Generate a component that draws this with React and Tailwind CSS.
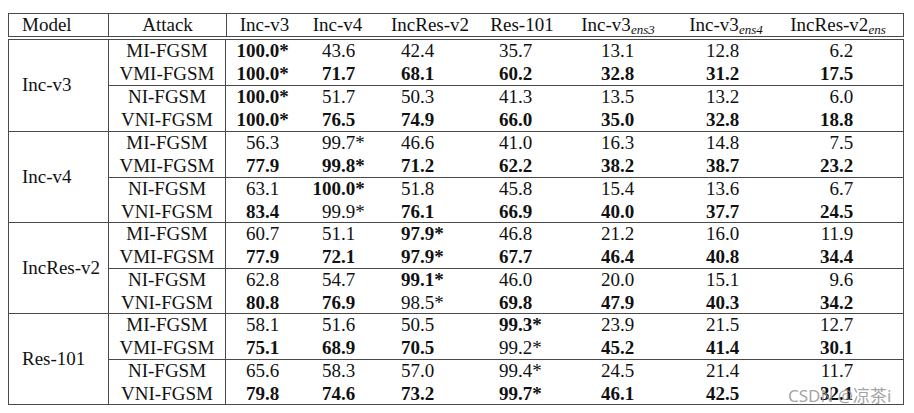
import React from 'react';

// header cells: width of each centred header cell after the Attack column
const headers = [
  { w: 'w-[75px]', label: 'Inc-v3' },
  { w: 'w-[71px]', label: 'Inc-v4' },
  { w: 'w-[114px]', label: 'IncRes-v2' },
  { w: 'w-[70px]', label: 'Res-101' },
  { w: 'w-[122px]', label: 'Inc-v3', sub: 'ens3' },
  { w: 'w-[94px]', label: 'Inc-v3', sub: 'ens4' },
  { w: 'flex-1', label: 'IncRes-v2', sub: 'ens' },
];

// value cells: integer part is right-aligned in 30px so the decimal points line up
const valueCols = ['w-[76px]', 'w-[79px]', 'w-[98px]', 'w-[102px]', 'w-[105px]', 'w-[114px]', 'flex-1'];

const groups = [
  {
    model: 'Inc-v3',
    rows: [
      ['MI-FGSM', '!100.0*', '43.6', '42.4', '35.7', '13.1', '12.8', '6.2'],
      ['VMI-FGSM', '!100.0*', '!71.7', '!68.1', '!60.2', '!32.8', '!31.2', '!17.5'],
      ['NI-FGSM', '!100.0*', '51.7', '50.3', '41.3', '13.5', '13.2', '6.0'],
      ['VNI-FGSM', '!100.0*', '!76.5', '!74.9', '!66.0', '!35.0', '!32.8', '!18.8'],
    ],
  },
  {
    model: 'Inc-v4',
    rows: [
      ['MI-FGSM', '56.3', '99.7*', '46.6', '41.0', '16.3', '14.8', '7.5'],
      ['VMI-FGSM', '!77.9', '!99.8*', '!71.2', '!62.2', '!38.2', '!38.7', '!23.2'],
      ['NI-FGSM', '63.1', '!100.0*', '51.8', '45.8', '15.4', '13.6', '6.7'],
      ['VNI-FGSM', '!83.4', '99.9*', '!76.1', '!66.9', '!40.0', '!37.7', '!24.5'],
    ],
  },
  {
    model: 'IncRes-v2',
    rows: [
      ['MI-FGSM', '60.7', '51.1', '!97.9*', '46.8', '21.2', '16.0', '11.9'],
      ['VMI-FGSM', '!77.9', '!72.1', '!97.9*', '!67.7', '!46.4', '!40.8', '!34.4'],
      ['NI-FGSM', '62.8', '54.7', '!99.1*', '46.0', '20.0', '15.1', '9.6'],
      ['VNI-FGSM', '!80.8', '!76.9', '98.5*', '!69.8', '!47.9', '!40.3', '!34.2'],
    ],
  },
  {
    model: 'Res-101',
    rows: [
      ['MI-FGSM', '58.1', '51.6', '50.5', '!99.3*', '23.9', '21.5', '12.7'],
      ['VMI-FGSM', '!75.1', '!68.9', '!70.5', '99.2*', '!45.2', '!41.4', '!30.1'],
      ['NI-FGSM', '65.6', '58.3', '57.0', '99.4*', '24.5', '21.4', '11.7'],
      ['VNI-FGSM', '!79.8', '!74.6', '!73.2', '!99.7*', '!46.1', '!42.5', '!32.1'],
    ],
  },
];

const Value = ({ raw, width }) => {
  const bold = raw.startsWith('!');
  const text = bold ? raw.slice(1) : raw;
  const dot = text.indexOf('.');
  return (
    <div className={`${width} flex ${bold ? 'font-bold' : ''}`}>
      <span className="w-[30px] text-right">{text.slice(0, dot)}</span>
      <span>{text.slice(dot)}</span>
    </div>
  );
};

const Row = ({ row }) => (
  <div className="flex h-[22.5px] leading-[22.5px]">
    <div className="w-[117px] shrink-0 text-center border-r border-[#4a4a4a]">{row[0]}</div>
    <div className="flex flex-1 pl-[9px]">
      {row.slice(1).map((v, i) => (
        <Value key={i} raw={v} width={valueCols[i]} />
      ))}
    </div>
  </div>
);

export default function App() {
  return (
    <div className="relative bg-white w-[914px] h-[413px] pt-[13px] pl-[8px] text-[19px] text-[#111] font-['Liberation_Serif','Times_New_Roman',Times,'Noto_Serif','DejaVu_Serif',FreeSerif,serif]">
      <div className="w-[896px] h-[24px] flex border border-[#4a4a4a] leading-[22px]">
        <div className="w-[100px] shrink-0 pl-[13px] border-r border-[#4a4a4a]">Model</div>
        <div className="w-[118px] shrink-0 text-center border-r border-[#4a4a4a]">Attack</div>
        {headers.map((h, i) => (
          <div key={i} className={`${h.w} text-center whitespace-nowrap`}>
            {h.label}
            {h.sub && <sub className="text-[13px] italic">{h.sub}</sub>}
          </div>
        ))}
      </div>

      <div className="w-[896px] mt-[2px] border border-[#4a4a4a]">
        {groups.map((g, gi) => (
          <div key={g.model} className={`flex h-[91px] ${gi > 0 ? 'border-t border-[#4a4a4a]' : ''}`}>
            <div className="w-[100px] shrink-0 pl-[13px] flex items-center">{g.model}</div>
            <div className="flex-1 border-l border-[#4a4a4a] -ml-px">
              <Row row={g.rows[0]} />
              <Row row={g.rows[1]} />
              <div className="border-t border-[#4a4a4a]">
                <Row row={g.rows[2]} />
                <Row row={g.rows[3]} />
              </div>
            </div>
          </div>
        ))}
      </div>

      <div className="absolute left-[788px] top-[383px] text-[17px] text-[#8c8c8c]/80 font-['Noto_Sans','Noto_Sans_CJK_SC',sans-serif]">
        CSDN @凉茶i
      </div>
    </div>
  );
}
